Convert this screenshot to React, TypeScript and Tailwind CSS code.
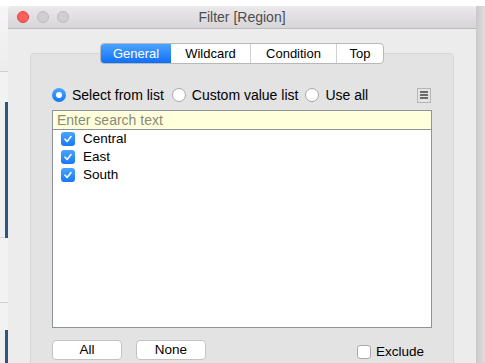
import React from 'react';

const font = { fontFamily: '"Liberation Sans", Arial, sans-serif' };

function Radio({ on, className = '' }: { on?: boolean; className?: string }) {
    return on ? (
        <span className={`w-[14px] h-[14px] rounded-full bg-gradient-to-b from-[#4ba6fd] to-[#1476f6] flex items-center justify-center shrink-0 ${className}`}>
            <span className="block w-[6px] h-[6px] rounded-full bg-white" />
        </span>
    ) : (
        <span className={`block w-[14px] h-[14px] rounded-full bg-white border border-[#a8a8a8] shrink-0 ${className}`} />
    );
}

function Check() {
    return (
        <span className="w-[14px] h-[14px] rounded-[3px] bg-gradient-to-b from-[#4aa5fd] to-[#1777f7] flex items-center justify-center shrink-0">
            <svg width="10" height="10" viewBox="0 0 10 10" fill="none">
                <path d="M2 5.2 L4.1 7.4 L8 2.6" stroke="white" strokeWidth="1.6" strokeLinecap="round" strokeLinejoin="round" />
            </svg>
        </span>
    );
}

export default function App() {
    const tabs = [
        { label: 'General', w: 'w-[70px]' },
        { label: 'Wildcard', w: 'w-[79px]' },
        { label: 'Condition', w: 'w-[86px]' },
        { label: 'Top', w: 'w-[47px]' },
    ];

    return (
        <div className="w-[485px] h-[363px] overflow-hidden bg-[#f4f4f4] flex flex-col text-[13.5px] text-black" style={font}>
            {/* backdrop top */}
            <div className="h-[6px] bg-white shrink-0" />
            <div className="flex flex-1 min-h-0">
                {/* backdrop left strip */}
                <div className="w-[8px] shrink-0 flex flex-col">
                    <div className="h-[66px] bg-gradient-to-b from-[#f6f6f6] to-[#ececec] border-b border-[#d0d0d0]" />
                    <div className="h-[30px] bg-[#f2f2f2]" />
                    <div className="h-[136px] flex">
                        <div className="w-[5px] bg-[#f0f0f0] border-b border-[#d6d6d6]" />
                        <div className="w-[3px] bg-[#2f5679]" />
                    </div>
                    <div className="h-[65px] bg-[#f2f2f2] border-b border-[#d0d0d0]" />
                    <div className="h-[27px] bg-[#f2f2f2]" />
                    <div className="flex flex-1">
                        <div className="w-[5px] bg-[#f0f0f0]" />
                        <div className="w-[3px] bg-[#2f5679]" />
                    </div>
                </div>

                {/* window */}
                <div className="w-[468px] shrink-0 flex flex-col bg-[#ececec] rounded-t-[5px] overflow-hidden">
                    <div className="h-[23px] shrink-0 relative flex items-center justify-center bg-gradient-to-b from-[#ebe9eb] to-[#d7d5d7] border-b border-[#bcbcbc]">
                        <div className="absolute left-[9px] top-[5px] flex gap-[8px]">
                            <span className="w-[12px] h-[12px] rounded-full bg-[#fc605c] border border-[#e0443e]" />
                            <span className="w-[12px] h-[12px] rounded-full bg-[#d0ced0] border border-[#bdbbbd]" />
                            <span className="w-[12px] h-[12px] rounded-full bg-[#d0ced0] border border-[#bdbbbd]" />
                        </div>
                        <span className="text-[14px] text-[#4d4d4d] mt-[1px]">Filter [Region]</span>
                    </div>

                    <div className="flex flex-col items-center pt-[14px] px-[22px]">
                        {/* tabs */}
                        <div className="relative z-10 flex h-[21px] rounded-[4px] border border-[#b8b8b8] bg-white overflow-hidden text-[13px]">
                            {tabs.map((t, i) => (
                                <div
                                    key={t.label}
                                    className={`${t.w} flex items-center justify-center ${i === 0 ? 'bg-gradient-to-b from-[#4aa3fd] to-[#0f6ff8] text-white' : 'text-black'} ${i > 1 ? 'border-l border-[#d0d0d0]' : ''}`}
                                >
                                    {t.label}
                                </div>
                            ))}
                        </div>

                        {/* group box */}
                        <div className="-mt-[11px] w-full h-[320px] bg-[#e3e3e3] border border-[#d6d6d6] rounded-[4px] px-[21px] pt-[34px] flex flex-col">
                            <div className="flex items-center justify-between h-[14px]">
                                <div className="flex items-center text-[14px]">
                                    <Radio on />
                                    <span className="ml-[6px]">Select from list</span>
                                    <Radio className="ml-[8px]" />
                                    <span className="ml-[6px]">Custom value list</span>
                                    <Radio className="ml-[7px]" />
                                    <span className="ml-[6px]">Use all</span>
                                </div>
                                <div className="w-[14px] h-[15px] border border-[#b5b5b5] flex flex-col items-center justify-center gap-[1px] mr-[1px]">
                                    <span className="block w-[8px] h-[2px] bg-[#6a6a6a]" />
                                    <span className="block w-[8px] h-[2px] bg-[#6a6a6a]" />
                                    <span className="block w-[8px] h-[2px] bg-[#6a6a6a]" />
                                </div>
                            </div>

                            {/* list */}
                            <div className="mt-[8px] h-[218px] border border-[#8d929b] bg-white flex flex-col">
                                <div className="h-[19px] bg-[#ffffdb] border-b border-[#8d929b] flex items-center pl-[4px] text-[#8a8a78] text-[14px]">
                                    Enter search text
                                </div>
                                <div className="flex flex-col">
                                    {['Central', 'East', 'South'].map(n => (
                                        <div key={n} className="h-[18px] flex items-center pl-[8px]">
                                            <Check />
                                            <span className="ml-[8px]">{n}</span>
                                        </div>
                                    ))}
                                </div>
                            </div>

                            {/* bottom buttons */}
                            <div className="mt-[9px] flex items-center">
                                <button className="w-[70px] h-[20px] rounded-[4px] bg-white border border-[#c3c3c3] text-[13.5px] leading-none">All</button>
                                <button className="ml-[14px] w-[70px] h-[20px] rounded-[4px] bg-white border border-[#c3c3c3] text-[13.5px] leading-none">None</button>
                                <div className="ml-auto mr-[8px] flex items-center mt-[5px]">
                                    <span className="block w-[14px] h-[14px] rounded-[3px] bg-white border border-[#a9a9a9]" />
                                    <span className="ml-[5px]">Exclude</span>
                                </div>
                            </div>
                        </div>
                    </div>
                </div>

                {/* backdrop right shadow */}
                <div className="flex-1 bg-gradient-to-r from-[#c9c9c9] to-[#dedede]" />
            </div>
        </div>
    );
}
